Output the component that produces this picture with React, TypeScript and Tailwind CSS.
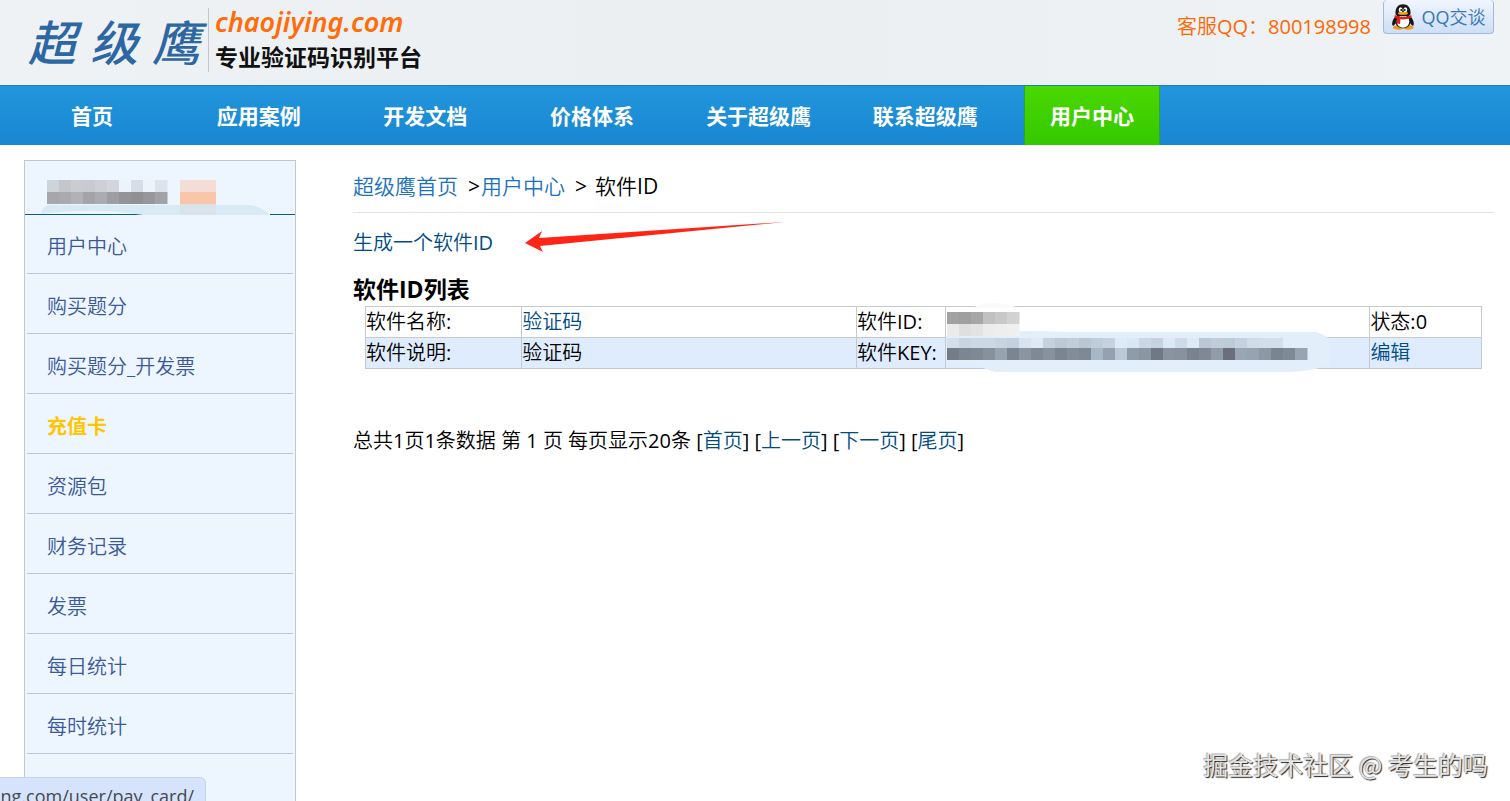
import React from "react";

const nav = ["首页", "应用案例", "开发文档", "价格体系", "关于超级鹰", "联系超级鹰", "用户中心"];
const side = ["用户中心", "购买题分", "购买题分_开发票", "充值卡", "资源包", "财务记录", "发票", "每日统计", "每时统计"];

const nameTop = ["#cfd3da", "#c3c7cb", "#c9cdd2", "#c8ccd2", "#cdd1d7", "#d2d6dc", "#edf3fb", "#d7dde8", "#edf3fb", "#dde3ec"];
const nameLow = ["#a5a7ab", "#a9abaf", "#b0b2b6", "#a2a4a8", "#a9acb0", "#9c9ea2", "#929496", "#8e9092", "#959799", "#a0a2a6"];

const idTop = ["#a3a2a2", "#a09f9f", "#a8a7a7", "#c2c1c1", "#c9c8c8", "#d3d2d2"];
const idLow = ["#ebebeb", "#e0dfdf", "#e3e3e3", "#ececec", "#eeeeee", "#efefef"];

const keyTop = [
  "#d3dfeb", "#c8d5e2", "#cdd9e5", "#ccd9e5", "#c8d5e1", "#c3d0dd", "#d8e4ef", "#dfeaf5", "#c5d2de", "#bccad8",
  "#c1ceda", "#b9c7d4", "#bfccd9", "#c6d2de", "#deeaf6", "#d8e7f6", "#cbd8e4", "#c5d2df", "#dbe8f5", "#cedbe8",
  "#deeaf6", "#bac8d5", "#c0cdd9", "#bdcad7", "#c5d1dd", "#d0dce8",
];
const keyLow = [
  "#737d88", "#7c8691", "#7f8994", "#87919c", "#98a3b0", "#7b8590", "#8a95a1", "#7f8994", "#88929d", "#7b8590",
  "#838d98", "#7f8994", "#a8b7c5", "#95a1ae", "#b9c9d8", "#8f9ba7", "#8b96a2", "#6f7983", "#8994a0", "#87929e",
  "#79838e", "#7f8893", "#909ca8", "#6b6f7b", "#98a6b4", "#96a3b0", "#8c98a4", "#7a8590", "#7f8a95", "#97a4b2",
];

function Penguin() {
  return (
    <svg className="h-[26px] w-6" viewBox="0 0 24 26" aria-hidden="true">
      <ellipse cx="7.5" cy="23.4" rx="5.5" ry="2.3" fill="#f39a1e" />
      <ellipse cx="17" cy="23.4" rx="5.5" ry="2.3" fill="#f39a1e" />
      <path d="M5 12C1.500 15 .4 20 1.600 21.500c1 .6 2.200-1 3-2.300zM19 12c3.500 3 4.600 8 3.400 9.500-1 .6-2.200-1-3-2.300z" fill="#171717" />
      <ellipse cx="12" cy="16.500" rx="8.300" ry="7.800" fill="#171717" />
      <ellipse cx="12" cy="17.500" rx="6.300" ry="6.200" fill="#fff" />
      <path d="M4.500 10C4 3.500 7.500.3 12 .3s8 3.200 7.500 9.700c-.4 3-14.600 3-15 0z" fill="#171717" />
      <ellipse cx="9.600" cy="5.700" rx="1.900" ry="2.500" fill="#fff" />
      <ellipse cx="14.400" cy="5.700" rx="1.900" ry="2.500" fill="#fff" />
      <circle cx="10.200" cy="6" r=".9" fill="#111" />
      <circle cx="13.800" cy="6" r=".9" fill="#111" />
      <ellipse cx="12" cy="9.300" rx="5" ry="1.500" fill="#f6a81c" />
      <path d="M3.800 11c5 2.600 11.400 2.600 16.400 0l.4 2.500c-4 1.900-7.600 2.200-11.200 1.800l-.3 4.700-3.600-.5.4-4.900-2.500-1z" fill="#dc1f1f" />
    </svg>
  );
}

function NameMosaic() {
  return (
    <svg className="h-[37px] w-full" viewBox="0 0 270 37" preserveAspectRatio="xMinYMax meet" aria-hidden="true">
      <path d="M0 35.500H118M245 35.500H270" stroke="#0d5f80" />
      <path d="M16 35q2-9 8-9H225q12 2 20 10H118Q70 28 16 35z" fill="#d8eaf6" />
      <rect x="155" y="25" width="36" height="11" fill="#d8e3ec" />
      {nameTop.map((c, i) => <rect key={i} x={22 + i * 12} y="1" width="12.500" height="12" fill={c} />)}
      {nameLow.map((c, i) => <rect key={i} x={22 + i * 12} y="13" width="12.500" height="12" fill={c} />)}
      <rect x="155" y="1" width="36" height="12" fill="#f4ddd5" />
      <rect x="155" y="13" width="36" height="12" fill="#fac6a9" />
    </svg>
  );
}

function KeyMosaic() {
  return (
    <svg className="absolute -top-[5px] left-0 h-[70px] w-[400px]" viewBox="0 0 400 70" aria-hidden="true">
      <path d="M26 6Q48-4 72 6z" fill="#fafafa" />
      <path d="M0 34Q30 27 120 30H370Q385 34 384 44V62Q366 70 340 70H50Q40 68 30 62H0z" fill="#e2eefa" />
      {idTop.map((c, i) => <rect key={i} x={1 + i * 12} y="10" width="12.500" height="12" fill={c} />)}
      {idLow.map((c, i) => <rect key={i} x={1 + i * 12} y="22" width="12.500" height="12" fill={c} />)}
      {keyTop.map((c, i) => <rect key={i} x={1 + i * 12} y="36" width="12.500" height="10" fill={c} />)}
      <rect x="313" y="36" width="24" height="10" fill="#d2deea" />
      {keyLow.map((c, i) => <rect key={i} x={1 + i * 12} y="46" width="12.500" height="12" fill={c} />)}
    </svg>
  );
}

export default function App() {
  return (
    <div className="relative h-screen overflow-hidden bg-white font-['Open_Sans','Noto_Sans_CJK_SC_DemiLight','Noto_Sans_CJK_SC',sans-serif] text-black">
      <header className="flex h-[85px] items-start justify-between bg-linear-to-r from-[#eef2f5] via-[#eceff2] to-[#f0f3f6] pr-4 pl-7">
        <a href="#home" className="flex pt-2" aria-label="超级鹰">
          <span className="flex h-16 w-[181px] items-center gap-[14px] border-r border-[#c2c5c8] font-['Noto_Sans_CJK_SC',sans-serif] text-5xl leading-none font-medium text-[#2d67a3] italic">
            <span>超</span>
            <span>级</span>
            <span>鹰</span>
          </span>
          <span className="flex flex-col pl-[6px]">
            <span className="font-['Noto_Sans',sans-serif] text-[27px] leading-7 font-semibold text-[#ff6c0a] italic">chaojiying.com</span>
            <span className="pt-1 font-['Noto_Sans_CJK_SC',sans-serif] text-[23px] leading-8 font-bold text-[#111]">专业验证码识别平台</span>
          </span>
        </a>
        <div className="flex items-start gap-3">
          <p className="pt-[13px] text-xl leading-7 text-[#ff6600]">客服QQ：800198998</p>
          <button type="button" className="flex h-[34px] w-[111px] items-center justify-center gap-[6px] rounded-sm border border-t-0 border-[#a3bade] bg-linear-to-b from-[#f0f5fe] to-[#cddff6] text-lg text-[#3877b8]">
            <Penguin />
            QQ交谈
          </button>
        </div>
      </header>

      <nav className="h-[60px] border-t border-[#1a7fba] bg-linear-to-b from-[#2196dc] to-[#1a86d2] pl-6 font-['Noto_Sans_CJK_SC',sans-serif]">
        <ul className="flex h-full max-w-[1136px] justify-between">
          {nav.map((n) => (
            <li key={n}>
              <a href="#nav" className={n === "用户中心" ? "flex h-full w-34 items-center justify-center border-x border-[#2fa52c] bg-linear-to-b from-[#4bd800] to-[#35c800] text-[21px] font-bold text-white" : "flex h-full w-34 items-center justify-center text-[21px] font-bold text-white"}>
                {n}
              </a>
            </li>
          ))}
        </ul>
      </nav>

      <div className="flex pt-[15px] pr-4 pl-6">
        <aside className="h-[700px] w-[272px] shrink-0 border border-[#bfc8d2] bg-[#edf5ff] font-['Open_Sans','Noto_Sans_CJK_SC',sans-serif]">
          <div className="flex h-[55px] items-end">
            <NameMosaic />
          </div>
          <ul className="px-[2px]">
            {side.map((s) => (
              <li key={s} className="h-[60px] border-b border-[#b9c9db] first:h-[58px]">
                <a href="#side" className={s === "充值卡" ? "flex h-full items-end pb-3 pl-5 text-xl leading-7 font-bold text-[#ffc600]" : "flex h-full items-end pb-3 pl-5 text-xl leading-7 font-[350] text-[#3b5998]"}>
                  {s}
                </a>
              </li>
            ))}
          </ul>
        </aside>

        <main className="min-w-0 flex-1 pl-[57px]">
          <div className="flex h-[53px] items-center border-b border-[#e3e3e3] pt-[2px] text-[21px]">
            <a href="#home" className="text-[#1c72bd]">超级鹰首页</a>
            <span className="pl-[10px]">&gt;</span>
            <a href="#user" className="pl-px text-[#1c72bd]">用户中心</a>
            <span className="px-[10px] pr-2">&gt;</span>
            <span>软件ID</span>
          </div>
          <div className="flex h-[60px] items-center gap-8">
            <a href="#create" className="text-xl text-[#004b85]">生成一个软件ID</a>
            <svg className="mb-3 h-8 w-[260px]" viewBox="0 0 260 32" aria-hidden="true">
              <path d="M0 22 17 10 14 17 260 1 15 25 18 31z" fill="#ff2516" />
            </svg>
          </div>
          <h1 className="font-['Open_Sans','Noto_Sans_CJK_SC',sans-serif] text-[23px] leading-[33px] font-bold">软件ID列表</h1>
          <div className="px-3">
            <table className="w-full table-fixed border-collapse text-xl leading-[30px] [&_td]:border [&_td]:border-[#c6c9cd] [&_td]:p-0">
              <colgroup>
                <col className="w-[14%]" />
                <col className="w-[30%]" />
                <col className="w-[8%]" />
                <col className="w-[38%]" />
                <col className="w-[10%]" />
              </colgroup>
              <tbody>
                <tr>
                  <td>软件名称:</td>
                  <td><a href="#app" className="text-[#004b85]">验证码</a></td>
                  <td>软件ID:</td>
                  <td>
                    <div className="relative h-[30px]">
                      <KeyMosaic />
                    </div>
                  </td>
                  <td>状态:0</td>
                </tr>
                <tr className="bg-[#dfecfe]">
                  <td>软件说明:</td>
                  <td>验证码</td>
                  <td>软件KEY:</td>
                  <td></td>
                  <td><a href="#edit" className="text-[#004b85]">编辑</a></td>
                </tr>
              </tbody>
            </table>
          </div>
          <p className="pt-[57px] text-xl leading-[30px]">
            总共1页1条数据 第 1 页 每页显示20条 [<a href="#1" className="text-[#004b85]">首页</a>] [<a href="#p" className="text-[#004b85]">上一页</a>] [<a href="#n" className="text-[#004b85]">下一页</a>] [<a href="#l" className="text-[#004b85]">尾页</a>]
          </p>
        </main>
      </div>

      <div className="absolute bottom-0 left-0 flex h-6 w-[206px] justify-end overflow-hidden rounded-tr-md border-t border-r border-[#c6d3ea] bg-[#d5e3fd] pt-1 pr-[11px] text-lg leading-7 text-[#45484e]">
        ng.com/user/pay_card/
      </div>
      <p className="absolute right-[22px] bottom-[17px] font-['Noto_Sans_CJK_SC',sans-serif] text-[25px] leading-10 text-[#e4e4e4] [text-shadow:1px_1px_1px_#222,-1px_-1px_1px_#aaa]">
        掘金技术社区 @ 考生的吗
      </p>
    </div>
  );
}
